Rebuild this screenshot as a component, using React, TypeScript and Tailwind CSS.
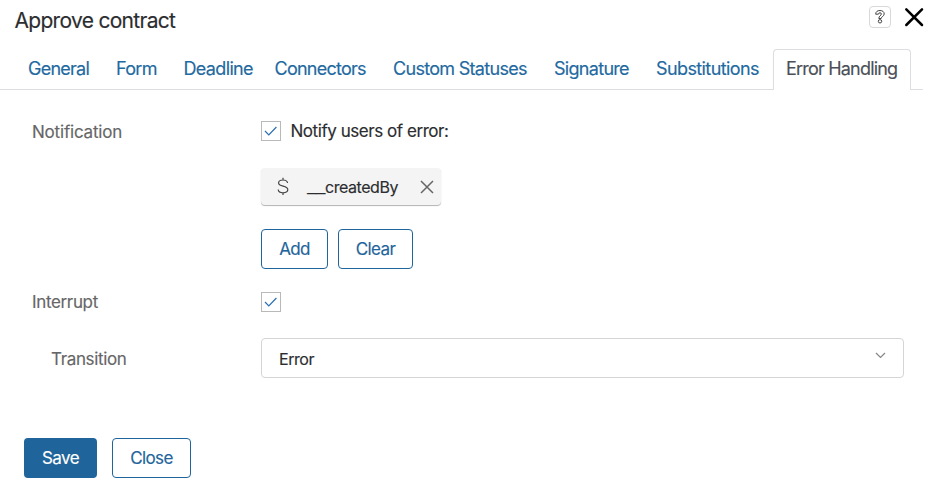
import React from "react";

const tabs = [
  { label: "General", style: "w-[88px] tracking-[-0.75px]" },
  { label: "Form", style: "w-[67.5px] tracking-[-0.7px]" },
  { label: "Deadline", style: "w-[91px] tracking-[-0.65px]" },
  { label: "Connectors", style: "w-[118.5px] tracking-[-0.75px]" },
  { label: "Custom Statuses", style: "w-[161px] tracking-[-0.7px]" },
  { label: "Signature", style: "w-[102px] tracking-[-0.7px]" },
  { label: "Substitutions", style: "w-[117px] tracking-[-0.6px]" },
];

function Checkbox() {
  return (
    <span className="flex h-5 w-5 shrink-0 items-center justify-center border border-[#b9b9b9] bg-white">
      <svg width="18" height="18" viewBox="0 0 18 18" fill="none" stroke="#2a6db0" strokeWidth="1.2">
        <path d="M3 9 L6.8 12.8 L14.4 5" />
      </svg>
    </span>
  );
}

function OutlineButton({ label, className }: { label: string; className: string }) {
  return (
    <button
      className={`flex h-10 items-center justify-center rounded-[4px] border border-[#1f659b] bg-white tracking-[-0.65px] text-[#1f659b] ${className}`}
    >
      {label}
    </button>
  );
}

export default function App() {
  return (
    <div className="h-[501px] w-[929px] overflow-hidden bg-white font-['Inter',sans-serif] text-[17px] leading-5 tracking-[-0.45px] text-[#2b2d30] [-webkit-text-stroke:0.15px]">
      <header className="flex h-[49px] justify-between pl-[14.5px]">
        <h1 className="pt-[9px] text-[21px] leading-6 tracking-[-0.7px]">Approve contract</h1>
        <div className="flex pt-[6px] pr-[5px]">
          <button className="mr-[13px] flex h-[22px] w-[22px] items-center justify-center rounded-[4px] border border-[#d8d8dc]">
            <svg width="12" height="16" viewBox="0 0 12 16" fill="white" stroke="#444" strokeWidth="1">
              <path d="M1.7 5.2 C1.7 2.7 3.4 1.5 6 1.5 C8.5 1.5 10.2 2.8 10.2 5 C10.2 7.4 7.2 7.4 7.2 9.5 H4.8 C4.8 6.8 7.4 6.5 7.4 5 C7.4 4.2 6.8 3.8 6 3.8 C5 3.8 4.5 4.3 4.4 5.2 Z" />
              <circle cx="6" cy="12.3" r="1.7" />
            </svg>
          </button>
          <svg className="mt-[1px]" width="20" height="20" viewBox="0 0 20 20" stroke="black" strokeWidth="2.5" strokeLinecap="round">
            <path d="M2.3 2.3 L18 18 M18 2.3 L2.3 18" />
          </svg>
        </div>
      </header>

      <nav className="flex h-[41px] w-[923px] text-[18px] whitespace-nowrap text-[#22699f]">
        <div className="flex w-[773px] border-b border-[#dcdde1] pt-[10px] pl-[28px]">
          {tabs.map((t) => (
            <a key={t.label} className={`shrink-0 ${t.style}`}>{t.label}</a>
          ))}
        </div>
        <a className="w-[138px] rounded-t-[4px] border border-b-0 border-[#dcdde1] pt-[9px] pl-[12px] tracking-[-0.8px] text-[#4b5057]">Error Handling</a>
        <div className="flex-1 border-b border-[#dcdde1]" />
      </nav>

      <main>
        <div className="flex pt-[31px]">
          <div className="w-[261px] pt-[1px] pl-[32px] tracking-[-0.2px] text-[#666]">Notification</div>
          <div>
            <label className="flex h-5 items-center gap-[9.5px]">
              <Checkbox />
              <span>Notify users of error:</span>
            </label>
            <div className="mt-[27px] flex h-[37px] w-[180px] items-center rounded-[4px] bg-[#f4f4f4] text-[16px] shadow-[0_1px_1px_rgba(0,0,0,0.3)]">
              <svg className="ml-[15px]" width="14" height="20" viewBox="0 0 14 20" fill="none" stroke="#444" strokeWidth="1.2">
                <path d="M7 0.8 V3 M7 15.8 V18 M11.6 6 C11.3 4 9.6 3 7 3 C4.4 3 2.6 4.2 2.6 6 C2.6 10 11.8 8.4 11.8 12.6 C11.8 14.6 9.8 15.8 7 15.8 C4.2 15.8 2.4 14.7 2.2 12.5" />
              </svg>
              <span className="flex w-[130px] pl-[17px]">
                <span className="w-[18px] origin-left scale-x-[1.3]">__</span>
                <span>createdBy</span>
              </span>
              <svg width="14" height="14" viewBox="0 0 14 14" stroke="#666" strokeWidth="1.5">
                <path d="M1 1 L13 13 M13 1 L1 13" />
              </svg>
            </div>
            <div className="mt-[24px] flex gap-[10px]">
              <OutlineButton label="Add" className="w-[67px]" />
              <OutlineButton label="Clear" className="w-[75px]" />
            </div>
          </div>
        </div>
        <div className="mt-[23px] flex h-5">
          <div className="w-[261px] pl-[32px] tracking-[-0.35px] text-[#666]">Interrupt</div>
          <Checkbox />
        </div>
        <div className="mt-[26px] flex items-center">
          <div className="w-[261px] pt-[2px] pl-[51px] tracking-[-0.35px] text-[#666]">Transition</div>
          <div className="flex h-10 w-[643px] items-center justify-between rounded-[4px] border border-[#d5d5d5] pr-[17px] pl-[17px]">
            <span className="pt-[2px] text-[16px]">Error</span>
            <svg className="-mt-[6px]" width="11" height="7" viewBox="0 0 11 7" fill="none" stroke="#888" strokeWidth="1.3">
              <path d="M1 1 L5.5 5.4 L10 1" />
            </svg>
          </div>
        </div>
      </main>

      <footer className="mt-[60px] flex gap-[15px] pl-[24px]">
        <button className="h-10 w-[73px] rounded-[4px] bg-[#1f659b] tracking-[-0.55px] text-white">Save</button>
        <OutlineButton label="Close" className="w-[79px]" />
      </footer>
    </div>
  );
}
